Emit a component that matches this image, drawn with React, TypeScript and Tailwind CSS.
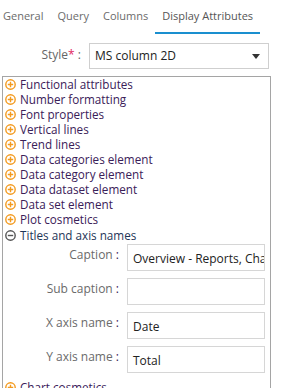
import React from 'react'

const tabs = ['General', 'Query', 'Columns', 'Display Attributes']

const collapsed = [
  'Functional attributes',
  'Number formatting',
  'Font properties',
  'Vertical lines',
  'Trend lines',
  'Data categories element',
  'Data category element',
  'Data dataset element',
  'Data set element',
  'Plot cosmetics',
]

const fields = [
  { label: 'Caption', value: 'Overview - Reports, Charts' },
  { label: 'Sub caption', value: '' },
  { label: 'X axis name', value: 'Date' },
  { label: 'Y axis name', value: 'Total' },
]

function PlusIcon() {
  return (
    <svg width="11" height="11" viewBox="0 0 11 11" className="shrink-0">
      <circle cx="5.5" cy="5.5" r="4.7" fill="none" stroke="#f39a1e" strokeWidth="1.4" />
      <path d="M2.8 5.5h5.4M5.5 2.8v5.4" stroke="#f39a1e" strokeWidth="1.4" />
    </svg>
  )
}

function MinusIcon() {
  return (
    <svg width="11" height="11" viewBox="0 0 11 11" className="shrink-0">
      <circle cx="5.5" cy="5.5" r="4.7" fill="none" stroke="#555555" strokeWidth="1.4" />
      <path d="M2.8 5.5h5.4" stroke="#555555" strokeWidth="1.4" />
    </svg>
  )
}

export default function App() {
  return (
    <div className="w-[297px] h-[388px] overflow-hidden bg-white text-[12px]" style={{ fontFamily: '"Open Sans", sans-serif' }}>
      {/* tabs */}
      <div className="flex -ml-[4px] h-[34px]">
        {tabs.map((t, i) => (
          <div
            key={t}
            className={`px-[7px] flex items-center pt-[1px] text-[11px] ${
              i === 3 ? 'border-b-2 border-[#1a8fcf] text-[#555]' : 'border-b-2 border-transparent text-[#6b6b6b]'
            }`}
          >
            {t}
          </div>
        ))}
      </div>

      {/* style select */}
      <div className="flex items-center mt-[9px]">
        <div className="w-[81px] text-right text-[#666] pb-[3px]">
          Style<span className="text-[#e0245e]">*</span> :
        </div>
        <div className="ml-[8px] w-[180px] h-[26px] border border-[#cfcfcf] flex items-center justify-between pl-[5px] pr-[8px] text-[#222]">
          <span>MS column 2D</span>
          <svg width="8" height="5" viewBox="0 0 8 5">
            <path d="M0 0h8L4 5z" fill="#333" />
          </svg>
        </div>
      </div>

      {/* attribute tree */}
      <div className="mt-[7px] ml-[2px] w-[269px] border border-[#a5a5a5] h-[320px]">
        {collapsed.map((c) => (
          <div key={c} className="flex items-center gap-[4px] pl-[2px] h-[15px] leading-[15px] text-[11.7px] text-[#3a2058]">
            <PlusIcon />
            <span>{c}</span>
          </div>
        ))}
        <div className="flex items-center gap-[4px] pl-[2px] h-[16px] leading-[15px] text-[11.7px] text-[#1e3557]">
          <MinusIcon />
          <span>Titles and axis names</span>
        </div>
        <div className="flex flex-col gap-[7px] mt-[1px]">
          {fields.map((f) => (
            <div key={f.label} className="flex items-start">
              <div className="w-[116px] text-right text-[#6a6a6a] pt-[2px]">
                {f.label} <span className="text-[#3a2058]">:</span>
              </div>
              <div className="ml-[8px] w-[138px] h-[27px] border border-[#d6d6d6] flex items-center pl-[5px] pt-[2px] overflow-hidden whitespace-nowrap text-[#222]">
                {f.value}
              </div>
            </div>
          ))}
        </div>
        <div className="flex items-center gap-[4px] pl-[2px] h-[15px] leading-[15px] text-[11.7px] text-[#3a2058] mt-[7px]">
          <PlusIcon />
          <span>Chart cosmetics</span>
        </div>
      </div>
    </div>
  )
}
